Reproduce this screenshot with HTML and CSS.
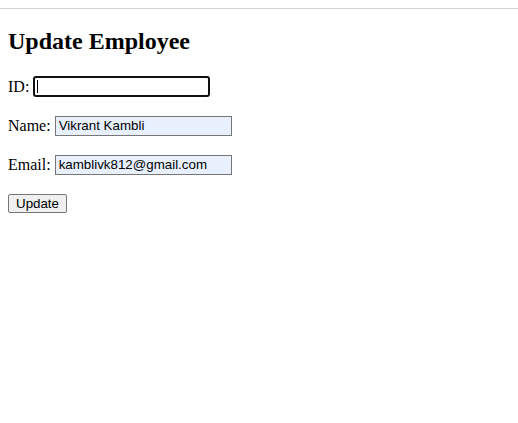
FILE: index.html
```html
<!DOCTYPE html>
<html>
<head>
<meta charset="utf-8">
<title>Update Employee</title>
<link rel="stylesheet" href="styles.css">
</head>
<body>
<div class="topline"></div>
<main class="page">
  <h2 class="title">Update Employee</h2>
  <form class="form">
    <div class="row">
      <label class="label" for="id">ID:</label>
      <span class="field-wrap">
        <input class="field field-focus" id="id" type="text">
        <span class="caret"></span>
      </span>
    </div>
    <div class="row">
      <label class="label" for="name">Name:</label>
      <input class="field field-filled" id="name" type="text" value="Vikrant Kambli">
    </div>
    <div class="row">
      <label class="label" for="email">Email:</label>
      <input class="field field-filled" id="email" type="text" value="kamblivk812@gmail.com">
    </div>
    <div class="row">
      <button class="btn" type="button">Update</button>
    </div>
  </form>
</main>
</body>
</html>
```
FILE: styles.css
```css
html, body {
  margin: 0;
  padding: 0;
  background: #ffffff;
}
body {
  font-family: "Liberation Serif", "Times New Roman", serif;
  font-size: 16px;
  color: #000;
}
.topline {
  margin-top: 8px;
  height: 1px;
  background: #d3d3d3;
}
.page {
  padding: 0 8px;
}
.title {
  margin: 19px 0 20px 0;
  font-size: 24px;
  font-weight: bold;
  line-height: 27px;
}
.form {
  display: flex;
  flex-direction: column;
  gap: 16px;
  margin: 0;
}
.row {
  display: flex;
  align-items: center;
  height: 23px;
}
.label {
  margin-right: 4px;
}
.field-wrap {
  position: relative;
  display: inline-block;
  height: 21px;
}
.caret {
  position: absolute;
  left: 4px;
  top: 4px;
  width: 1px;
  height: 13px;
  background: #000;
}
.field {
  box-sizing: border-box;
  width: 177px;
  height: 21px;
  margin: 0;
  padding: 1px 3px;
  font-family: "Liberation Sans", Arial, sans-serif;
  font-size: 13.33px;
  color: #000;
  border: 1px solid #767676;
  border-radius: 0;
  background: #fff;
  outline: none;
  display: block;
}
.field-filled {
  height: 20px;
  background: #e8f0fe;
}
.field-focus {
  border: 2px solid #101010;
  border-radius: 3px;
}
.btn {
  box-sizing: border-box;
  height: 19px;
  margin: 0;
  padding: 0 7px;
  font-family: "Liberation Sans", Arial, sans-serif;
  font-size: 13.33px;
  color: #000;
  background: #efefef;
  border: 1px solid #767676;
  border-radius: 2px;
}
```
